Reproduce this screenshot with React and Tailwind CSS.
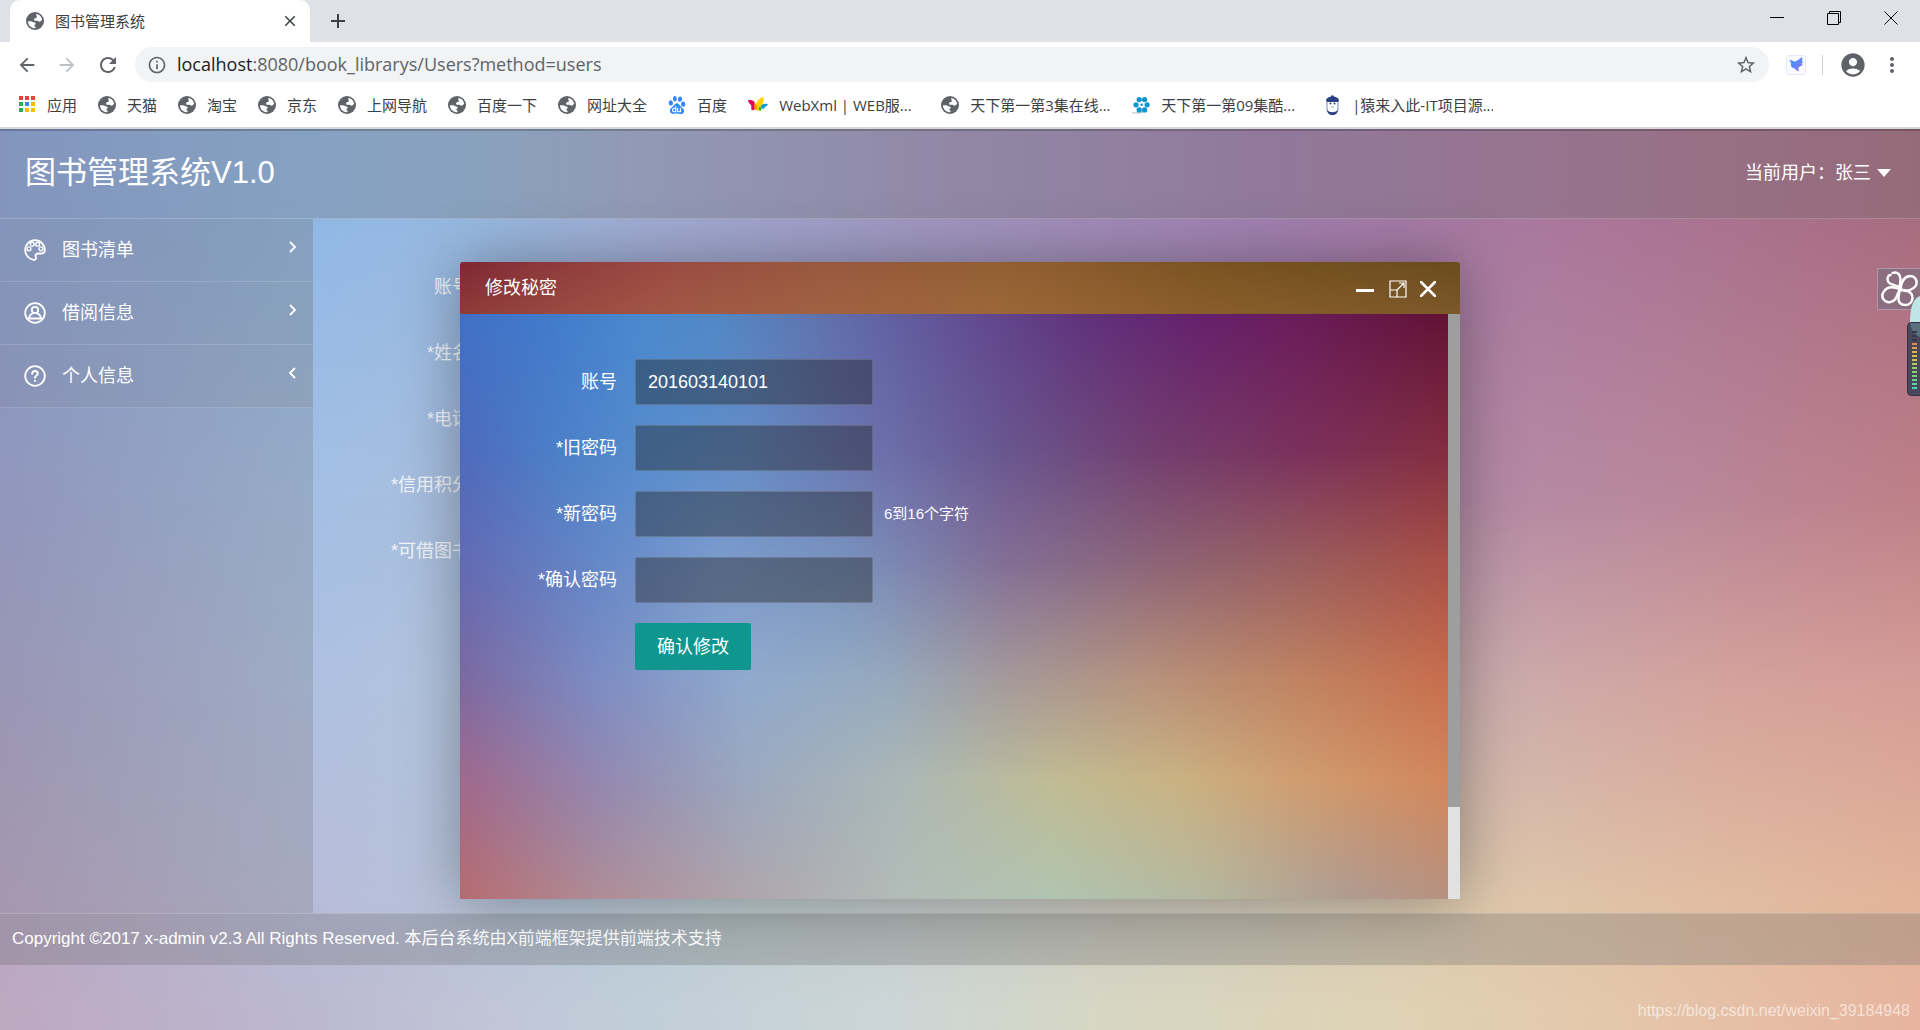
import React, { useState } from "react";
import {
  MdAccountCircle,
  MdAdd,
  MdArrowBack,
  MdArrowForward,
  MdClose,
  MdInfoOutline,
  MdMoreVert,
  MdRefresh,
  MdStarBorder,
} from "react-icons/md";
import { SiBaidu } from "react-icons/si";

function Globe() {
  return (
    <svg viewBox="0 0 16 16" className="size-[18px] shrink-0" aria-hidden="true">
      <circle cx="8" cy="8" r="8" fill="#5f6368" />
      <path
        fill="#fff"
        d="M9.200 1.700C12 2.200 14.200 4.400 14.400 7.200c-.9.200-1.200 1.500-2.400 1.500-.9 0-1-.9-1.800-.9H8.300c-.8 0-1.100-.6-1.100-1.200 0-.8.600-1.100 1.400-1.200.8 0 1.100-.5 1-1.200-.1-.9-.7-1.300-.4-2.500z"
      />
      <path
        fill="#fff"
        d="M1.700 8.200h2.900c.9 0 1.300.7 2.200.8 1 .1 1.800.4 1.800 1.200 0 1-1.200 1-1.200 2 0 .7 1.200.6 1.200 1.500 0 .4-.4.700-1 .7C4.200 14 1.700 11.500 1.700 8.200z"
      />
    </svg>
  );
}

function AppsIcon() {
  const colors = ["#ea4335", "#ea4335", "#ea4335", "#34a853", "#4285f4", "#fbbc04", "#34a853", "#fbbc04", "#fbbc04"];
  return (
    <svg viewBox="0 0 18 18" className="size-[18px] shrink-0" aria-hidden="true">
      {colors.map((c, i) => (
        <rect key={i} x={1 + (i % 3) * 6} y={Math.floor(i / 3) * 6} width="4" height="4" fill={c} />
      ))}
    </svg>
  );
}

function ButterflyIcon() {
  return (
    <svg viewBox="0 0 20 18" className="h-[18px] w-5 shrink-0" aria-hidden="true">
      <path fill="#e6005c" d="M0 4c4-.5 6 .5 7 3l.5 5c-1 2-3 3-4 1.500C2.500 12 4 10.500 3 9 2 8 .5 7 0 4z" />
      <path fill="#ffd200" d="M7.500 13C6.500 8 10 2.500 15 1c1.500 3 .5 8-3 12-1.500 2-3.700 2-4.500 0z" />
      <path fill="#f39800" d="M6.500 6.500l3 4-1.500 4c-2-1-2.500-5-1.500-8z" />
      <path fill="#00a0d2" d="M12.500 10c2-2 4-2.500 7.500-2-1 2.500-3 2.500-3.500 4-.5 1.200-2.500 1-3 0z" />
      <path fill="#3aa935" d="M11 11l3 1-1.500 3c-1.500 0-2.500-2-1.500-4z" />
    </svg>
  );
}

function FilmIcon() {
  return (
    <svg viewBox="0 0 20 20" className="size-[18px] shrink-0" aria-hidden="true">
      <path d="M0 18.500c6 1 12 0 16-3" stroke="#c9ced2" strokeWidth="1.500" fill="none" />
      <g fill="#0a95cf">
        <circle cx="8" cy="4" r="2.900" />
        <circle cx="14" cy="4" r="2.900" />
        <circle cx="16.800" cy="9.800" r="2.900" />
        <circle cx="14" cy="15.500" r="2.900" />
        <circle cx="8" cy="15.500" r="2.900" />
        <circle cx="4.500" cy="9.800" r="2.900" />
        <circle cx="10.700" cy="9.800" r="1.400" />
      </g>
    </svg>
  );
}

function PenguinIcon() {
  return (
    <svg viewBox="0 0 18 20" className="h-5 w-[18px] shrink-0" aria-hidden="true">
      <rect x="4" y="2" width="11" height="17.500" rx="5.500" fill="#fff" stroke="#8d9bc0" strokeWidth="1.200" />
      <path d="M3 6c0-3 3-4.500 6.500-4.500S16 3 16 6l-1.500 1H4.500z" fill="#27407f" />
      <circle cx="9.500" cy="1.500" r="1.300" fill="#27407f" />
      <path d="M3.800 14.500c2 3.500 9.400 3.500 11.400 0-.5 3.500-2.500 5.500-5.700 5.500s-5.200-2-5.700-5.500z" fill="#27407f" />
      <circle cx="7.500" cy="8.500" r="1" fill="#27407f" />
      <circle cx="11.500" cy="8.500" r="1" fill="#27407f" />
      <path d="M8 12h3" stroke="#9aa6c4" />
    </svg>
  );
}

const bookmarks = [
  { text: "应用", icon: <AppsIcon /> },
  { text: "天猫", icon: <Globe /> },
  { text: "淘宝", icon: <Globe /> },
  { text: "京东", icon: <Globe /> },
  { text: "上网导航", icon: <Globe /> },
  { text: "百度一下", icon: <Globe /> },
  { text: "网址大全", icon: <Globe /> },
  { text: "百度", icon: <SiBaidu className="size-[18px] shrink-0 text-[#3388ff]" /> },
  { text: "WebXml | WEB服...", icon: <ButterflyIcon />, long: true },
  { text: "天下第一第3集在线...", icon: <Globe />, long: true },
  { text: "天下第一第09集酷...", icon: <FilmIcon />, long: true },
  { text: "|猿来入此-IT项目源...", icon: <PenguinIcon />, long: true },
];

function BrowserChrome() {
  return (
    <div className="shrink-0 bg-white font-['Open_Sans','Noto_Sans_CJK_SC',sans-serif] text-[#3c4043]">
      <div className="flex h-[42px] bg-[#dee1e6]">
        <div className="ml-[10px] flex w-[300px] items-center gap-[11px] rounded-t-[10px] bg-white pr-[11px] pl-4 text-[15px]">
          <Globe />
          <span className="flex-1">图书管理系统</span>
          <button type="button" aria-label="关闭标签页">
            <MdClose className="size-[18px]" />
          </button>
        </div>
        <button type="button" aria-label="新标签页" className="ml-4">
          <MdAdd className="size-6" />
        </button>
        <div className="mr-px ml-auto flex h-9 items-center text-black">
          <button type="button" aria-label="最小化" className="flex w-[57px] justify-center">
            <svg viewBox="0 0 14 14" className="size-[14px]"><path d="M0 6.500h14" stroke="currentColor" /></svg>
          </button>
          <button type="button" aria-label="还原" className="flex w-[57px] justify-center">
            <svg viewBox="0 0 14 14" className="size-[14px]" fill="none" stroke="currentColor">
              <path d="M.5 2.500h11v11H.5zM2.500 2.500v-2h11v11h-2" />
            </svg>
          </button>
          <button type="button" aria-label="关闭" className="flex w-[57px] justify-center">
            <svg viewBox="0 0 14 14" className="size-[14px]"><path d="M.5.5l13 13M13.500.5l-13 13" stroke="currentColor" /></svg>
          </button>
        </div>
      </div>
      <div className="flex h-[45px] items-center px-4 text-[#5f6368]">
        <button type="button" aria-label="后退"><MdArrowBack className="size-[22px]" /></button>
        <button type="button" aria-label="前进" className="ml-[18px]"><MdArrowForward className="size-[22px] text-[#bdc1c6]" /></button>
        <button type="button" aria-label="刷新" className="ml-[18px]"><MdRefresh className="size-6" /></button>
        <div className="ml-[15px] flex h-[35px] flex-1 items-center rounded-full bg-[#f1f3f4] pr-3 pl-3">
          <MdInfoOutline className="size-5 shrink-0" />
          <span className="ml-[10px] flex-1 text-[18px]">
            <span className="text-[#202124]">localhost</span>:8080/book_librarys/Users?method=users
          </span>
          <button type="button" aria-label="收藏"><MdStarBorder className="size-[22px]" /></button>
        </div>
        <button type="button" aria-label="扩展程序" className="ml-[17px]">
          <svg viewBox="0 0 20 20" className="size-5">
            <defs>
              <linearGradient id="bird" x1="0" y1="0" x2="1" y2="1">
                <stop offset="0.300" stopColor="#4a8ff5" />
                <stop offset="1" stopColor="#a070f5" />
              </linearGradient>
            </defs>
            <rect x=".5" y=".5" width="19" height="19" rx="2.500" fill="#fafbff" stroke="#e4e8f8" />
            <path d="M3 5.500c2-.6 3.500 0 5.500 1.200 2-.5 5-2.500 7.500-4.700l.5 3-.8 1.500 1.800.5-2 1.800 1.500 1.200-3.200 1.500-1.500 1.500.5 3.500c-2.500-.7-3.500-2.200-4.800-3.500C5.500 13 4.700 11 5 8.500 4.800 7 4.200 6.200 3 5.500z" fill="url(#bird)" />
          </svg>
        </button>
        <span className="mx-4 h-5 w-px bg-[#cfd2d6]" />
        <button type="button" aria-label="用户"><MdAccountCircle className="size-7" /></button>
        <button type="button" aria-label="更多" className="ml-[13px]"><MdMoreVert className="size-6" /></button>
      </div>
      <nav className="flex h-10 items-start gap-[21px] pt-2 pr-4 pl-[18px] text-[15px]">
        {bookmarks.map((b) => (
          <a key={b.text} href="#" className="flex shrink-0 items-center gap-[11px] leading-5">
            {b.icon}
            {b.long ? <span className="w-[141px] overflow-hidden whitespace-nowrap">{b.text}</span> : b.text}
          </a>
        ))}
      </nav>
      <div className="h-[2px] bg-[#d6d8db]" />
    </div>
  );
}

// Soft colour mesh of the page: one horizontal gradient per row, each faded in over the row above it.
function PageBackdrop() {
  return (
    <div className="absolute inset-0 -z-10" aria-hidden="true">
      <div className="absolute inset-0 bg-[linear-gradient(to_right,#8da7e0_0%,#90b8e6_16%,#96b8e0_25%,#a1add5_33%,#a193be_50%,#a17eb0_66%,#aa7599_83%,#a76b7f_100%)]" />
      <div className="absolute inset-0 bg-[linear-gradient(to_right,#9ca4d6_0%,#a4bfe4_16%,#a9bedd_25%,#a9aecf_50%,#b28caa_72%,#b8889e_85%,#be8088_100%)] [mask-image:linear-gradient(transparent_8%,black_41%)]" />
      <div className="absolute inset-0 bg-[linear-gradient(to_right,#a9a3cc_0%,#afc0e0_16%,#b4c5dd_25%,#bcc3d0_50%,#cbafaf_76%,#d6a49c_90%,#d69f98_100%)] [mask-image:linear-gradient(transparent_41%,black_63%)]" />
      <div className="absolute inset-0 bg-[linear-gradient(to_right,#b8a5c4_0%,#b8bcd9_16%,#b6c6d9_28%,#c0cdd0_40%,#c8cdcb_50%,#d3cab8_66%,#dec8ac_77%,#e3b499_100%)] [mask-image:linear-gradient(transparent_63%,black_86%)]" />
      <div className="absolute inset-0 bg-[linear-gradient(to_right,#bda8c0_0%,#bbb8d0_16%,#c1c4d7_25%,#c0ced9_33%,#ccd5d7_46%,#d6d7c4_57%,#dfd2b4_73%,#e4c8ac_83%,#e7b49e_100%)] [mask-image:linear-gradient(transparent_86%,black_98%)]" />
    </div>
  );
}

function DialogBackdrop() {
  return (
    <div className="absolute inset-0 -z-10" aria-hidden="true">
      <div className="absolute inset-0 bg-[linear-gradient(to_right,#4070c6_0%,#427ccc_10%,#4a88ce_18%,#5288c6_26%,#6074ae_36%,#625096_50%,#60327c_63%,#66206c_75%,#6a1c5a_85%,#621234_100%)]" />
      <div className="absolute inset-0 bg-[linear-gradient(to_right,#4e6abc_0%,#4c80c8_10%,#578ece_20%,#648cc6_29%,#6c6eaa_43%,#68568f_55%,#723e70_70%,#7a305c_85%,#822d41_100%)] [mask-image:linear-gradient(transparent_0%,black_23%)]" />
      <div className="absolute inset-0 bg-[linear-gradient(to_right,#626ab4_0%,#6488c8_14%,#7b9bcd_26%,#7891be_39%,#826e96_55%,#8c6478_70%,#995d5f_85%,#a84f46_100%)] [mask-image:linear-gradient(transparent_23%,black_42%)]" />
      <div className="absolute inset-0 bg-[linear-gradient(to_right,#7d69a0_0%,#7d8cc3_14%,#91aacd_29%,#96aabe_43%,#a59b9b_55%,#b8937c_70%,#c08462_85%,#c86f4e_100%)] [mask-image:linear-gradient(transparent_42%,black_63%)]" />
      <div className="absolute inset-0 bg-[linear-gradient(to_right,#a0698c_0%,#9487af_14%,#9ba8bf_29%,#acb8b6_45%,#c0bc94_60%,#cab283_73%,#d09d71_85%,#d2875c_100%)] [mask-image:linear-gradient(transparent_63%,black_80%)]" />
      <div className="absolute inset-0 bg-[linear-gradient(to_right,#b66c70_0%,#af8c96_14%,#afa5ac_29%,#b2bcb8_45%,#b0c4b0_60%,#b4b8a0_75%,#af9b91_90%,#b69180_100%)] [mask-image:linear-gradient(transparent_80%,black_100%)]" />
    </div>
  );
}

function LineIcon({ children }) {
  return (
    <svg viewBox="0 0 22 22" className="size-[22px] shrink-0" fill="none" stroke="currentColor" strokeWidth="1.800" strokeLinecap="round" strokeLinejoin="round" aria-hidden="true">
      {children}
    </svg>
  );
}

const menu = [
  {
    text: "图书清单",
    icon: (
      <LineIcon>
        <path d="M11 1.200C5.500 1.200 1.200 5.500 1.200 11c0 5 3.500 9 8.300 9.800 2 .3 2.800-1 2.300-2.600-.6-2-.3-3.700 2.200-3.700h3.500c2 0 3.300-1.500 3.300-3.500 0-5.500-4.300-9.800-9.800-9.800z" />
        <circle cx="5" cy="9.800" r="1.900" strokeWidth="1.400" />
        <circle cx="8.200" cy="5.200" r="1.900" strokeWidth="1.400" />
        <circle cx="13.600" cy="5.200" r="1.900" strokeWidth="1.400" />
        <circle cx="17" cy="9.800" r="1.900" strokeWidth="1.400" />
      </LineIcon>
    ),
  },
  {
    text: "借阅信息",
    icon: (
      <LineIcon>
        <circle cx="11" cy="11" r="9.800" />
        <circle cx="11" cy="8" r="3.200" />
        <path d="M5 16.500c.3-3 2.200-4.700 4.200-5.200M17 16.500c-.3-3-2.200-4.700-4.200-5.200M5 16.500h12" />
      </LineIcon>
    ),
  },
  {
    text: "个人信息",
    left: true,
    icon: (
      <LineIcon>
        <circle cx="11" cy="11" r="9.800" />
        <path strokeWidth="2" d="M8.200 8.800c0-1.700 1.200-2.700 2.800-2.700s2.800 1 2.800 2.500c0 1.900-2.800 2-2.800 4.200M11 15.800v.1" />
      </LineIcon>
    ),
  },
];

const profileFields = ["账号", "*姓名", "*电话", "*信用积分", "*可借图书"];

const passwordFields = [
  { id: "account", label: "账号", type: "text", value: "201603140101" },
  { id: "old", label: "*旧密码", type: "password", value: "" },
  { id: "next", label: "*新密码", type: "password", value: "", hint: "6到16个字符" },
  { id: "confirm", label: "*确认密码", type: "password", value: "" },
];

function Field({ id, label, type, value, hint }) {
  const [text, setText] = useState(value);
  return (
    <div className="flex h-[46px] items-center">
      <label htmlFor={id} className="w-[157px] shrink-0 text-right">{label}</label>
      <input
        id={id}
        type={type}
        value={text}
        onChange={(e) => setText(e.target.value)}
        className="ml-[18px] h-[46px] w-[238px] rounded-[2px] border border-white/15 bg-[#1e1e1e]/40 px-3 text-white outline-none"
      />
      {hint && <span className="ml-[11px] text-[15px]">{hint}</span>}
    </div>
  );
}

function PasswordDialog() {
  return (
    <div className="absolute inset-0 flex items-center justify-center pt-[2px]">
      <section role="dialog" aria-label="修改秘密" className="flex h-[637px] w-[1000px] flex-col rounded-t-[3px] shadow-[1px_1px_62px_rgba(0,0,0,0.35)]">
        <header className="flex h-[52px] shrink-0 items-center rounded-t-[3px] bg-[linear-gradient(to_bottom,transparent,rgba(190,130,80,0.22)),linear-gradient(to_right,#802733_0%,#8f3b3d_10%,#9a4a42_20%,#98583f_36%,#925f32_54%,#7c5322_74%,#74501f_84%,#6a4c1e_100%)] pr-6 pl-[25px]">
          <h2 className="flex-1">修改秘密</h2>
          <div className="flex items-center gap-[13px] pt-[2px]">
            <button type="button" aria-label="最小化">
              <svg viewBox="0 0 18 18" className="size-[18px]"><path d="M0 10.500h18" stroke="#fff" strokeWidth="3" /></svg>
            </button>
            <button type="button" aria-label="最大化" className="ml-[2px]">
              <svg viewBox="0 0 18 18" className="size-[18px]" fill="none" stroke="#fff" strokeWidth="1.200">
                <path d="M1 1h16v16H1zM1 10h7v7M8 10l7-7M10 3h5v5" />
              </svg>
            </button>
            <button type="button" aria-label="关闭">
              <svg viewBox="0 0 16 16" className="size-4"><path d="M1 1l14 14M15 1L1 15" stroke="#fff" strokeWidth="2.600" strokeLinecap="round" /></svg>
            </button>
          </div>
        </header>
        <div className="flex flex-1">
          <form className="relative isolate flex flex-1 flex-col gap-5 pt-[45px]" onSubmit={(e) => e.preventDefault()}>
            <DialogBackdrop />
            {passwordFields.map((f) => (
              <Field key={f.id} {...f} />
            ))}
            <button type="submit" className="ml-[175px] h-[47px] self-start rounded-[2px] bg-[#0f968e] px-[22px]">确认修改</button>
          </form>
          <div className="flex w-3 flex-col bg-[#e1e1e1]">
            <div className="h-[493px] bg-[#9e9e9e]" />
          </div>
        </div>
      </section>
    </div>
  );
}

function FloatingWidget() {
  const levels = ["#33384a", "#33384a", "#33384a", "#e08a52", "#e0a04a", "#e0b444", "#d9c24a", "#c8c850", "#a9cf5a", "#9ad060", "#88d070", "#78d080", "#6ad090", "#5cd0a4", "#50d0b4"];
  return (
    <svg viewBox="0 0 43 128" className="absolute top-[139px] right-0 h-32 w-[43px]" aria-hidden="true">
      <rect x=".5" y=".5" width="43" height="41" fill="#8b6f80" stroke="#b098a6" />
      <g transform="translate(22.500 21)" fill="none" stroke="#fff" strokeWidth="2.400" strokeLinecap="round">
        <path d="M1-1C-3-5-12-3-12-10c0-3 2-4 3-4M-7-16C-2-18 1-14 1-10c0 4-1 7-1 10" />
        <path d="M1 0C2-8 5-13 11-13c4 0 7 4 6 8S12 1 6 2L1 0z" />
        <path d="M0 1c6 0 13 1 13 8 0 4-3 7-7 7S-1 14-1 10 0 4 0 1z" />
        <path d="M0 0c-7-3-13-2-16 3s0 9 4 10 8-2 9-5 3-6 3-8z" />
      </g>
      <path d="M43 28c-6 2-10 10-10 26h10z" fill="#bfe6e4" />
      <rect x="30.500" y="54.500" width="16" height="73" rx="4" fill="#4a475a" stroke="#2f3142" />
      <path d="M33 55h10v14c-6-2-9-7-10-14z" fill="#587080" />
      {levels.map((c, i) => (
        <rect key={i} x="35" y={63 + i * 4} width="5" height="2" fill={c} />
      ))}
    </svg>
  );
}

export default function App() {
  return (
    <div className="flex min-h-screen flex-col">
      <BrowserChrome />
      <div className="relative isolate flex flex-1 flex-col overflow-hidden pb-[65px] font-['Liberation_Sans','Noto_Sans_CJK_SC',sans-serif] text-[18px] leading-6 text-white">
        <PageBackdrop />
        <header className="flex h-[90px] items-center justify-between border-t-2 border-b border-t-black/20 border-b-white/20 bg-[#6e6e6e]/30 px-[25px] pb-[3px]">
          <h1 className="text-[31px] leading-10">图书管理系统V1.0</h1>
          <button type="button" className="flex items-center gap-[6px] pr-1">
            当前用户：张三
            <svg viewBox="0 0 14 8" className="h-2 w-[14px]" aria-hidden="true"><path d="M0 0h14L7 8z" fill="currentColor" /></svg>
          </button>
        </header>
        <div className="flex flex-1">
          <aside className="w-[313px] shrink-0 bg-[#6e6e6e]/25">
            <nav>
              {menu.map((m) => (
                <a key={m.text} href="#" className="flex h-[63px] items-center border-b border-white/15 bg-[#6e6e6e]/10 pr-[14px] pl-6">
                  {m.icon}
                  <span className="ml-4 flex-1">{m.text}</span>
                  <svg viewBox="0 0 12 24" className="h-6 w-3" fill="none" stroke="currentColor" strokeWidth="1.800" aria-hidden="true">
                    <path d={m.left ? "M8 4L3 9l5 5" : "M3 4l5 5-5 5"} />
                  </svg>
                </a>
              ))}
            </nav>
          </aside>
          <main className="flex flex-1 flex-col gap-5 pt-[45px] text-white/85">
            {profileFields.map((label, i) => (
              <div key={label} className="flex h-[46px] items-center">
                <label htmlFor={`profile-${i}`} className="w-[157px] text-right">{label}</label>
                <input id={`profile-${i}`} type="text" className="ml-[18px] h-[46px] w-[238px] bg-[#1e1e1e]/40 px-3" />
              </div>
            ))}
          </main>
        </div>
        <footer className="h-[52px] border-t border-white/20 bg-[#6e6e6e]/30 px-3 pt-[13px] text-[17px]">
          Copyright ©2017 x-admin v2.3 All Rights Reserved. 本后台系统由X前端框架提供前端技术支持
        </footer>
        <PasswordDialog />
        <FloatingWidget />
        <span className="absolute right-[10px] bottom-[7px] text-[16px] text-white/60">https://blog.csdn.net/weixin_39184948</span>
      </div>
    </div>
  );
}
